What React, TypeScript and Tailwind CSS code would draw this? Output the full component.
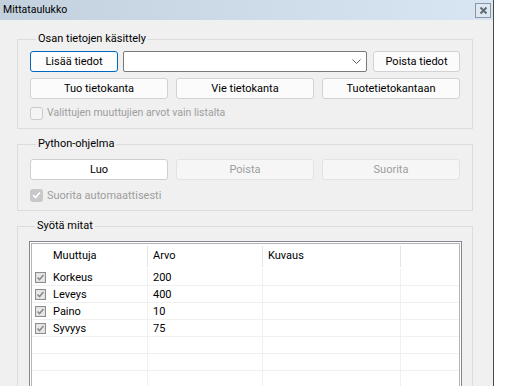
import React from "react";

const font = { fontFamily: 'Roboto, "Noto Sans", sans-serif' };

function Btn({ label, w, primary, disabled, white }: { label: string; w?: string; primary?: boolean; disabled?: boolean; white?: boolean }) {
  let cls = "h-[21px] rounded-[3px] border flex items-center justify-center text-[11px] leading-none ";
  if (disabled) cls += "bg-[#f6f6f6] border-[#e3e3e3] text-[#9d9d9d]";
  else if (primary) cls += "bg-[#fdfdfd] border-[#0067c0] text-black";
  else if (white) cls += "bg-white border-[#cfcfcf] text-black";
  else cls += "bg-[#fbfbfb] border-[#d2d2d2] text-black";
  return <div className={cls + " " + (w ?? "")}>{label}</div>;
}

function CheckSmall() {
  return (
    <svg width="11" height="11" viewBox="0 0 11 11" className="shrink-0">
      <rect x="0.5" y="0.5" width="10" height="10" fill="#dadada" stroke="#8e8e8e" />
      <rect x="1.5" y="1.5" width="8" height="8" fill="#e8e8e8" />
      <path d="M2.5 5.5 L4.5 7.5 L8.5 3" stroke="#8a8a8a" strokeWidth="1.6" fill="none" />
    </svg>
  );
}

const rows = [
  ["Korkeus", "200"],
  ["Leveys", "400"],
  ["Paino", "10"],
  ["Syvyys", "75"],
  ["", ""],
  ["", ""],
  ["", ""],
];

export default function App() {
  return (
    <div className="w-[506px] h-[386px] bg-white overflow-hidden flex" style={font}>
      <div className="w-[494px] h-full flex flex-col border-r border-[#4a4a4a]">
        <div className="h-[20px] shrink-0 flex items-center justify-between bg-gradient-to-r from-[#c3d1de] to-[#d8e5f2] pl-[3px] pr-[2px]">
          <span className="text-[10.5px] text-black leading-none">Mittataulukko</span>
          <div className="w-[16px] h-[15px] border border-[#8996a4] bg-[#dfe8f1] flex items-center justify-center">
            <svg width="9" height="9" viewBox="0 0 9 9">
              <path d="M1.5 1.5 L7.5 7.5 M7.5 1.5 L1.5 7.5" stroke="#5f6b78" strokeWidth="2" />
            </svg>
          </div>
        </div>
        <div className="flex-1 bg-[#f0f0f0] pl-[17px] pr-[20px] pt-[12px] flex flex-col text-[11px]">
          <fieldset className="border border-[#dcdcdc] px-[12px] pb-[8px] pt-[5px] m-0">
            <legend className="ml-[6px] px-[2px] text-[11px] leading-[14px] text-black">Osan tietojen käsittely</legend>
            <div className="flex items-center gap-[5px]">
              <Btn label="Lisää tiedot" w="w-[88px]" primary />
              <div className="w-[244px] h-[21px] border border-[#7a7a7a] bg-white rounded-[2px] flex items-center justify-end pr-[5px]">
                <svg width="9" height="6" viewBox="0 0 9 6">
                  <path d="M0.5 0.5 L4.5 4.5 L8.5 0.5" stroke="#606060" fill="none" />
                </svg>
              </div>
              <Btn label="Poista tiedot" w="w-[87px] ml-[1px]" />
            </div>
            <div className="grid grid-cols-3 gap-[8px] mt-[6px]">
              <Btn label="Tuo tietokanta" />
              <Btn label="Vie tietokanta" />
              <Btn label="Tuotetietokantaan" />
            </div>
            <div className="flex items-center gap-[4px] mt-[7px] h-[14px]">
              <div className="w-[13px] h-[13px] rounded-[3px] border border-[#cbcbcb] bg-[#f4f4f4]" />
              <span className="text-[#9d9d9d] text-[10.5px] leading-none">Valittujen muuttujien arvot vain listalta</span>
            </div>
          </fieldset>
          <fieldset className="border border-[#dcdcdc] px-[12px] pb-[8px] pt-[8px] mt-[8px] m-0">
            <legend className="ml-[6px] px-[2px] text-[11px] leading-[14px] text-black">Python-ohjelma</legend>
            <div className="grid grid-cols-3 gap-[8px]">
              <Btn label="Luo" white w="h-[20px]" />
              <Btn label="Poista" disabled w="h-[20px]" />
              <Btn label="Suorita" disabled w="h-[20px]" />
            </div>
            <div className="flex items-center gap-[4px] mt-[8px] h-[14px]">
              <div className="w-[13px] h-[13px] rounded-[3px] bg-[#c8c8c8] flex items-center justify-center">
                <svg width="9" height="8" viewBox="0 0 9 8">
                  <path d="M1 4 L3.5 6.5 L8 1.5" stroke="#ffffff" strokeWidth="1.6" fill="none" />
                </svg>
              </div>
              <span className="text-[#9d9d9d] leading-none">Suorita automaattisesti</span>
            </div>
          </fieldset>
          <fieldset className="border border-[#dcdcdc] border-b-0 pl-[11px] pr-[10px] pt-[8px] mt-[8px] m-0 flex-1 min-h-0">
            <legend className="ml-[6px] px-[2px] text-[11px] leading-[14px] text-black">Syötä mitat</legend>
            <div className="border border-[#828790] h-[200px] bg-white p-[1px]">
              <div className="border border-[#b5b5b5] h-full">
                <div className="flex h-[25px] text-black">
                  <div className="w-[116px] pl-[21px] flex items-center border-r border-[#e5e5e5] my-[2px]">Muuttuja</div>
                  <div className="w-[115px] pl-[5px] flex items-center border-r border-[#e5e5e5] my-[2px]">Arvo</div>
                  <div className="w-[138px] pl-[5px] flex items-center border-r border-[#e5e5e5] my-[2px]">Kuvaus</div>
                  <div className="flex-1" />
                </div>
                {rows.map((r, i) => (
                  <div key={i} className="flex h-[17px] border-b border-[#f0f0f0] text-black">
                    <div className="w-[116px] flex items-center border-r border-[#f0f0f0] pl-[3px] gap-[7px]">
                      {r[0] && <CheckSmall />}
                      <span className="leading-none">{r[0]}</span>
                    </div>
                    <div className="w-[115px] pl-[5px] flex items-center border-r border-[#f0f0f0] leading-none">{r[1]}</div>
                    <div className="w-[138px] border-r border-[#f0f0f0]" />
                    <div className="flex-1" />
                  </div>
                ))}
              </div>
            </div>
          </fieldset>
        </div>
      </div>
      <div className="flex-1 bg-white" />
    </div>
  );
}
